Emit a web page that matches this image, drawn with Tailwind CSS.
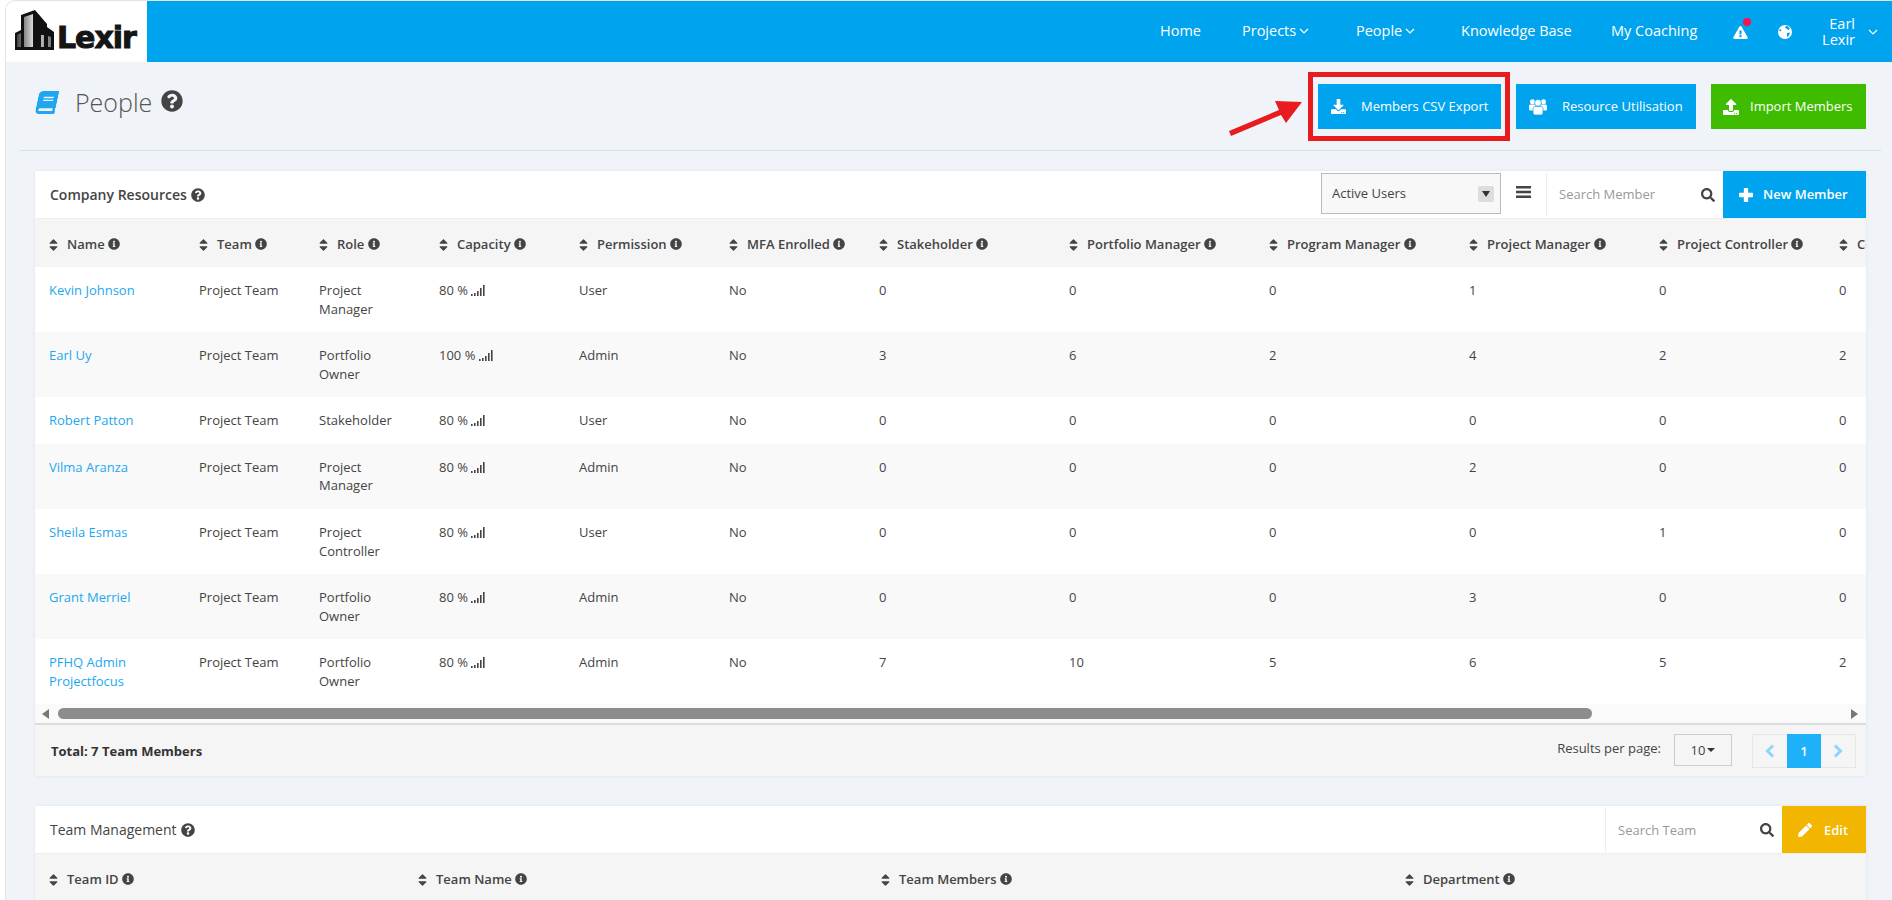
<!DOCTYPE html>
<html lang="en">
<head>
  <meta charset="UTF-8">
  <meta name="viewport" content="width=device-width, initial-scale=1.0">
  <title>Lexir - People</title>
  <script src="https://cdn.jsdelivr.net/npm/@tailwindcss/browser@4"></script>
</head>
<body class="bg-white h-[900px] overflow-hidden font-['Open_Sans',sans-serif] text-[13px] leading-[1.42857] text-[#444]">
  <!-- Icon sprites -->
  <svg class="hidden" xmlns="http://www.w3.org/2000/svg">
    <symbol id="i-info" viewBox="0 0 512 512"><path fill="currentColor" d="M256 8C119.043 8 8 119.083 8 256c0 136.997 111.043 248 248 248s248-111.003 248-248C504 119.083 392.957 8 256 8zm0 110c23.196 0 42 18.804 42 42s-18.804 42-42 42-42-18.804-42-42 18.804-42 42-42zm56 254c0 6.627-5.373 12-12 12h-88c-6.627 0-12-5.373-12-12v-24c0-6.627 5.373-12 12-12h12v-64h-12c-6.627 0-12-5.373-12-12v-24c0-6.627 5.373-12 12-12h64c6.627 0 12 5.373 12 12v100h12c6.627 0 12 5.373 12 12v24z"/></symbol>
    <symbol id="i-help" viewBox="0 0 512 512"><path fill="currentColor" d="M504 256c0 136.997-111.043 248-248 248S8 392.997 8 256C8 119.083 119.043 8 256 8s248 111.083 248 248zM262.655 90c-54.497 0-89.255 22.957-116.549 63.758-3.536 5.286-2.353 12.415 2.715 16.258l34.699 26.31c5.205 3.947 12.621 3.008 16.665-2.122 17.864-22.658 30.113-35.797 57.303-35.797 20.429 0 45.698 13.148 45.698 32.958 0 14.976-12.363 22.667-32.534 33.976C247.128 238.528 216 254.941 216 296v4c0 6.627 5.373 12 12 12h56c6.627 0 12-5.373 12-12v-1.333c0-28.462 83.186-29.647 83.186-106.667 0-58.002-60.165-102-116.531-102zM256 338c-25.365 0-46 20.635-46 46 0 25.364 20.635 46 46 46s46-20.636 46-46c0-25.365-20.635-46-46-46z"/></symbol>
    <symbol id="i-search" viewBox="0 0 512 512"><path fill="currentColor" d="M505 442.7L405.3 343c-4.5-4.5-10.6-7-17-7H372c27.6-35.3 44-79.7 44-128C416 93.1 322.9 0 208 0S0 93.1 0 208s93.1 208 208 208c48.3 0 92.7-16.4 128-44v16.3c0 6.4 2.5 12.5 7 17l99.7 99.7c9.4 9.4 24.6 9.4 33.9 0l28.3-28.3c9.4-9.4 9.4-24.6.1-34zM208 336c-70.7 0-128-57.2-128-128 0-70.7 57.2-128 128-128 70.7 0 128 57.2 128 128 0 70.7-57.2 128-128 128z"/></symbol>
    <symbol id="i-sort" viewBox="0 0 320 512"><path fill="currentColor" d="M41 300h238c21.4 0 32.1 25.9 17 41L177 460c-9.4 9.4-24.6 9.4-33.9 0L24 341c-15.1-15.1-4.4-41 17-41zm255-128L177 53c-9.4-9.4-24.6-9.4-33.9 0L24 172c-15.1 15.1-4.4 41 17 41h238c21.4 0 32.1-25.9 17-41z"/></symbol>
    <symbol id="i-plus" viewBox="0 0 16 16"><path fill="currentColor" d="M5.500 1a1 1 0 0 1 1-1h3a1 1 0 0 1 1 1v4.500H15a1 1 0 0 1 1 1v3a1 1 0 0 1-1 1h-4.500V15a1 1 0 0 1-1 1h-3a1 1 0 0 1-1-1v-4.500H1a1 1 0 0 1-1-1v-3a1 1 0 0 1 1-1h4.500z"/></symbol>
    <symbol id="i-pencil" viewBox="0 0 512 512"><path fill="currentColor" d="M497.9 142.1l-46.1 46.1c-4.7 4.7-12.3 4.7-17 0l-111-111c-4.7-4.7-4.7-12.3 0-17l46.1-46.1c18.7-18.7 49.1-18.7 67.9 0l60.1 60.1c18.8 18.7 18.8 49.1 0 67.9zM284.2 99.8L21.6 362.4.4 483.9c-2.9 16.4 11.4 30.6 27.8 27.7l121.5-21.3 262.6-262.6c4.7-4.7 4.7-12.3 0-17l-111-111c-4.8-4.7-12.4-4.7-17.1.1z"/></symbol>
    <symbol id="i-download" viewBox="0 0 512 512"><path fill="currentColor" d="M216 0h80c13.3 0 24 10.7 24 24v168h87.7c17.8 0 26.7 21.5 14.1 34.1L269.7 378.3c-7.5 7.5-19.8 7.500-27.3 0L90.1 226.1c-12.6-12.6-3.7-34.1 14.1-34.1H192V24c0-13.3 10.7-24 24-24zm296 376v112c0 13.3-10.7 24-24 24H24c-13.3 0-24-10.7-24-24V376c0-13.3 10.7-24 24-24h146.7l49 49c20.1 20.1 52.5 20.1 72.6 0l49-49H488c13.3 0 24 10.7 24 24zm-124 88c0-11-9-20-20-20s-20 9-20 20 9 20 20 20 20-9 20-20zm64 0c0-11-9-20-20-20s-20 9-20 20 9 20 20 20 20-9 20-20z"/></symbol>
    <symbol id="i-upload" viewBox="0 0 512 512"><path fill="currentColor" d="M296 384h-80c-13.3 0-24-10.7-24-24V192h-87.7c-17.8 0-26.7-21.5-14.1-34.1L242.3 5.700c7.500-7.500 19.800-7.500 27.300 0l152.200 152.200c12.600 12.600 3.700 34.100-14.100 34.100H320v168c0 13.300-10.700 24-24 24zm216-8v112c0 13.300-10.700 24-24 24H24c-13.300 0-24-10.700-24-24V376c0-13.300 10.700-24 24-24h136v8c0 30.900 25.100 56 56 56h80c30.900 0 56-25.100 56-56v-8h136c13.300 0 24 10.700 24 24zm-124 88c0-11-9-20-20-20s-20 9-20 20 9 20 20 20 20-9 20-20zm64 0c0-11-9-20-20-20s-20 9-20 20 9 20 20 20 20-9 20-20z"/></symbol>
    <symbol id="i-users" viewBox="0 0 18 16"><circle cx="3.500" cy="2.800" r="2.500" fill="currentColor"/><circle cx="14.500" cy="2.800" r="2.500" fill="currentColor"/><path fill="currentColor" d="M0 7c0-1 .8-1.500 1.800-1.500h14.400c1 0 1.800.5 1.800 1.500v3.500a1 1 0 0 1-1 1H1a1 1 0 0 1-1-1z"/><g stroke="#00a3ee" stroke-width=".7"><circle cx="9" cy="3.800" r="3.400" fill="currentColor"/><path fill="currentColor" d="M5.800 7.500h6.400c1 0 1.800 1 1.800 2V14a2 2 0 0 1-2 2H6a2 2 0 0 1-2-2V9.500c0-1 .8-2 1.800-2z"/></g></symbol>
    <symbol id="i-book" viewBox="0 0 448 512"><path fill="currentColor" d="M448 360V24c0-13.300-10.700-24-24-24H96C43 0 0 43 0 96v320c0 53 43 96 96 96h328c13.300 0 24-10.700 24-24v-16c0-7.500-3.500-14.300-8.900-18.700-4.200-15.400-4.200-59.300 0-74.700 5.400-4.300 8.900-11.100 8.900-18.600zM128 134c0-3.300 2.700-6 6-6h212c3.300 0 6 2.700 6 6v20c0 3.300-2.700 6-6 6H134c-3.300 0-6-2.700-6-6v-20zm0 64c0-3.300 2.700-6 6-6h212c3.300 0 6 2.700 6 6v20c0 3.300-2.700 6-6 6H134c-3.300 0-6-2.700-6-6v-20zm253.400 250H96c-17.700 0-32-14.300-32-32 0-17.600 14.400-32 32-32h285.400c-1.900 17.100-1.900 46.900 0 64z"/></symbol>
    <symbol id="i-warn" viewBox="0 0 576 512"><path fill="currentColor" d="M569.517 440.013C587.975 472.007 564.806 512 527.94 512H48.054c-36.937 0-59.999-40.055-41.577-71.987L246.423 23.985c18.467-32.009 64.72-31.951 83.154 0l239.94 416.028zM288 354c-25.405 0-46 20.595-46 46s20.595 46 46 46 46-20.595 46-46-20.595-46-46-46zm-43.673-165.346l7.418 136c.347 6.364 5.609 11.346 11.982 11.346h48.546c6.373 0 11.635-4.982 11.982-11.346l7.418-136c.375-6.874-5.098-12.654-11.982-12.654h-63.383c-6.884 0-12.356 5.78-11.981 12.654z"/></symbol>
    <symbol id="i-signal" viewBox="0 0 14 11"><path fill="currentColor" d="M0 9h1.600v2H0zM3 8h1.600v3H3zM6 6h1.600v5H6zM9 3h1.600v8H9zM12 0h1.600v11H12z"/></symbol>
    <symbol id="i-chev" viewBox="0 0 10 6"><path fill="none" stroke="currentColor" stroke-width="1.200" d="M1 1l4 4 4-4"/></symbol>
  </svg>

  <div class="ml-[5px] border-l border-t border-[#e4e4e4] rounded-tl-[10px] overflow-hidden bg-[#f0f3f7] h-[900px]">
    <!-- Navbar -->
    <nav class="flex h-[61px]">
      <div class="w-[141px] bg-white flex items-start pl-[9px] pt-[9px] shrink-0">
        <svg width="39" height="41" viewBox="0 0 39 41" class="shrink-0">
          <defs>
            <linearGradient id="bld" x1="0" x2="1" y1="0" y2="0"><stop offset="0" stop-color="#444"/><stop offset="0.5" stop-color="#e4e4e4"/><stop offset="1" stop-color="#777"/></linearGradient>
          </defs>
          <path fill="#111" d="M6 5L20 0l12 14v3l7 5v18H0V23l6-3z"/>
          <path fill="url(#bld)" d="M9 7l9-3v33H9zM2 25l4-2v14H2zM26 25h3v12h-3zM33 26l3 1v10h-3z"/>
        </svg>
        <span class="font-['DejaVu_Sans',sans-serif] font-bold text-[30px] leading-none text-[#151515] mt-[13px] ml-[3px] tracking-[-1px] [-webkit-text-stroke:1px_#151515]">Lexir</span>
      </div>
      <div class="flex-1 bg-[#00a3ee] flex items-center justify-end text-white text-[14.5px] pr-[14px]">
        <a class="w-[82px]">Home</a>
        <a class="w-[114px] flex items-center gap-[3px]">Projects <svg class="w-[10px] h-[6px]"><use href="#i-chev"/></svg></a>
        <a class="w-[105px] flex items-center gap-[3px]">People <svg class="w-[10px] h-[6px]"><use href="#i-chev"/></svg></a>
        <a class="w-[150px]">Knowledge Base</a>
        <a class="w-[122px]">My Coaching</a>
        <span class="relative w-[45px] flex">
          <svg class="w-[15px] h-[13px] mt-[2px]"><use href="#i-warn"/></svg>
          <span class="absolute -top-[6px] left-[10px] w-[8px] h-[8px] rounded-full bg-[#f4134f]"></span>
        </span>
        <span class="w-[44px] flex">
          <svg class="w-[14px] h-[14px]" viewBox="0 0 14 14"><circle cx="7" cy="7" r="7" fill="#fff"/><path fill="#00a3ee" d="M7 1.500l2.500-.5L12 3.500 10.500 5 9 4 7.500 3zM9 8l3-.5-1 3-2 1.500zM1 5l1.500-1 1 1.500-1.500 1z"/></svg>
        </span>
        <span class="text-right leading-[16px] w-[33px] mr-[13px]">Earl<br>Lexir</span>
        <svg class="w-[10px] h-[6px]"><use href="#i-chev"/></svg>
      </div>
    </nav>

    <!-- Page header -->
    <header class="mx-[14px] mr-[11px] h-[89px] border-b border-[#d5dfe9] flex justify-between px-[15px] pt-[22px]">
      <div class="flex items-start text-[#555]">
        <svg class="w-[20px] h-[23px] text-[#1ea7f0] -skew-x-12 ml-[2px] mt-[7px]"><use href="#i-book"/></svg>
        <h1 class="text-[25px] font-light leading-[34px] ml-[18px] mt-[1px]">People</h1>
        <svg class="w-[22px] h-[22px] text-[#444] ml-[9px] mt-[6px]"><use href="#i-help"/></svg>
      </div>
      <div class="flex gap-[15px] text-white h-[45px]">
        <button class="relative w-[183px] bg-[#00a3ee] flex items-center pl-[13px]">
          <svg class="w-[15px] h-[15px]"><use href="#i-download"/></svg>
          <span class="ml-[15px]">Members CSV Export</span>
          <!-- red annotation box and arrow -->
          <span class="absolute -left-[10px] -top-[12px] w-[202px] h-[69px] border-[5px] border-[#e81c1f]"></span>
          <svg class="absolute -left-[90px] top-[16px] w-[76px] h-[36px]" viewBox="0 0 76 36"><path fill="#e81c1f" d="M74 2L47 1l4 9L1 31l2 5 50-21 5 8z"/></svg>
        </button>
        <button class="w-[180px] bg-[#00a3ee] flex items-center pl-[13px]">
          <svg class="w-[18px] h-[16px]"><use href="#i-users"/></svg>
          <span class="ml-[15px]">Resource Utilisation</span>
        </button>
        <button class="w-[155px] bg-[#3fbc00] flex items-center pl-[12px]">
          <svg class="w-[16px] h-[16px]"><use href="#i-upload"/></svg>
          <span class="ml-[11px]">Import Members</span>
        </button>
      </div>
    </header>

    <!-- Company Resources -->
    <section class="mx-[29px] mr-[26px] mt-[20px] bg-white shadow-[0_0_3px_rgba(0,0,0,0.08)]">
      <div class="flex h-[48px] items-stretch border-b border-[#eee]">
        <div class="flex-1 flex items-center pl-[15px] text-[14px] font-semibold">
          Company Resources
          <svg class="w-[14px] h-[14px] ml-[4px]"><use href="#i-help"/></svg>
        </div>
        <div class="mt-[2px] w-[180px] h-[41px] border border-[#bbb] bg-[#f8f8f8] flex items-center justify-between pl-[10px] pr-[6px]">
          <span>Active Users</span>
          <span class="w-[16px] h-[16px] rounded-[2px] bg-[#ddd] flex items-center justify-center"><span class="border-x-[4px] border-x-transparent border-t-[6px] border-t-[#333]"></span></span>
        </div>
        <div class="w-[45px] flex items-center justify-center pb-[5px]">
          <svg width="15" height="12" viewBox="0 0 15 12"><path fill="#444" d="M0 0h15v2.500H0zM0 4.700h15v2.500H0zM0 9.400h15v2.500H0z"/></svg>
        </div>
        <div class="w-[177px] my-[2px] border-l border-[#eee] flex items-center justify-between pl-[12px] pr-[8px]">
          <span class="text-[#999]">Search Member</span>
          <svg class="w-[14px] h-[14px]"><use href="#i-search"/></svg>
        </div>
        <button class="w-[143px] bg-[#00a3ee] text-white font-semibold flex items-center pl-[16px]">
          <svg class="w-[14px] h-[14px]"><use href="#i-plus"/></svg>
          <span class="ml-[10px]">New Member</span>
        </button>
      </div>

      <div class="overflow-hidden">
        <table class="table-fixed w-[1990px] border-collapse [&_td]:px-[14px] [&_td]:py-[14px] [&_td]:align-top [&_th]:px-[14px] [&_th]:pt-[2px] [&_th]:h-[48px] [&_th]:text-left [&_th]:font-semibold [&_th]:whitespace-nowrap">
          <colgroup>
            <col class="w-[150px]"><col class="w-[120px]"><col class="w-[120px]"><col class="w-[140px]"><col class="w-[150px]"><col class="w-[150px]"><col class="w-[190px]"><col class="w-[200px]"><col class="w-[200px]"><col class="w-[190px]"><col class="w-[180px]"><col class="w-[200px]">
          </colgroup>
          <thead class="bg-[#f5f5f5]">
            <tr>
              <th><svg class="inline w-[9px] h-[14px] mr-[9px] align-[-3px]"><use href="#i-sort"/></svg>Name <svg class="inline w-[12px] h-[12px] align-[-1px]"><use href="#i-info"/></svg></th>
              <th><svg class="inline w-[9px] h-[14px] mr-[9px] align-[-3px]"><use href="#i-sort"/></svg>Team <svg class="inline w-[12px] h-[12px] align-[-1px]"><use href="#i-info"/></svg></th>
              <th><svg class="inline w-[9px] h-[14px] mr-[9px] align-[-3px]"><use href="#i-sort"/></svg>Role <svg class="inline w-[12px] h-[12px] align-[-1px]"><use href="#i-info"/></svg></th>
              <th><svg class="inline w-[9px] h-[14px] mr-[9px] align-[-3px]"><use href="#i-sort"/></svg>Capacity <svg class="inline w-[12px] h-[12px] align-[-1px]"><use href="#i-info"/></svg></th>
              <th><svg class="inline w-[9px] h-[14px] mr-[9px] align-[-3px]"><use href="#i-sort"/></svg>Permission <svg class="inline w-[12px] h-[12px] align-[-1px]"><use href="#i-info"/></svg></th>
              <th><svg class="inline w-[9px] h-[14px] mr-[9px] align-[-3px]"><use href="#i-sort"/></svg>MFA Enrolled <svg class="inline w-[12px] h-[12px] align-[-1px]"><use href="#i-info"/></svg></th>
              <th><svg class="inline w-[9px] h-[14px] mr-[9px] align-[-3px]"><use href="#i-sort"/></svg>Stakeholder <svg class="inline w-[12px] h-[12px] align-[-1px]"><use href="#i-info"/></svg></th>
              <th><svg class="inline w-[9px] h-[14px] mr-[9px] align-[-3px]"><use href="#i-sort"/></svg>Portfolio Manager <svg class="inline w-[12px] h-[12px] align-[-1px]"><use href="#i-info"/></svg></th>
              <th><svg class="inline w-[9px] h-[14px] mr-[9px] align-[-3px]"><use href="#i-sort"/></svg>Program Manager <svg class="inline w-[12px] h-[12px] align-[-1px]"><use href="#i-info"/></svg></th>
              <th><svg class="inline w-[9px] h-[14px] mr-[9px] align-[-3px]"><use href="#i-sort"/></svg>Project Manager <svg class="inline w-[12px] h-[12px] align-[-1px]"><use href="#i-info"/></svg></th>
              <th><svg class="inline w-[9px] h-[14px] mr-[9px] align-[-3px]"><use href="#i-sort"/></svg>Project Controller <svg class="inline w-[12px] h-[12px] align-[-1px]"><use href="#i-info"/></svg></th>
              <th><svg class="inline w-[9px] h-[14px] mr-[9px] align-[-3px]"><use href="#i-sort"/></svg>Contributor <svg class="inline w-[12px] h-[12px] align-[-1px]"><use href="#i-info"/></svg></th>
            </tr>
          </thead>
          <tbody>
            <tr>
              <td><a class="text-[#1ea7f0]">Kevin Johnson</a></td><td>Project Team</td><td>Project Manager</td><td>80 % <svg class="inline w-[14px] h-[11px] align-[-1px]"><use href="#i-signal"/></svg></td><td>User</td><td>No</td><td>0</td><td>0</td><td>0</td><td>1</td><td>0</td><td>0</td>
            </tr>
            <tr class="bg-[#f9f9f9]">
              <td><a class="text-[#1ea7f0]">Earl Uy</a></td><td>Project Team</td><td>Portfolio Owner</td><td>100 % <svg class="inline w-[14px] h-[11px] align-[-1px]"><use href="#i-signal"/></svg></td><td>Admin</td><td>No</td><td>3</td><td>6</td><td>2</td><td>4</td><td>2</td><td>2</td>
            </tr>
            <tr>
              <td><a class="text-[#1ea7f0]">Robert Patton</a></td><td>Project Team</td><td>Stakeholder</td><td>80 % <svg class="inline w-[14px] h-[11px] align-[-1px]"><use href="#i-signal"/></svg></td><td>User</td><td>No</td><td>0</td><td>0</td><td>0</td><td>0</td><td>0</td><td>0</td>
            </tr>
            <tr class="bg-[#f9f9f9]">
              <td><a class="text-[#1ea7f0]">Vilma Aranza</a></td><td>Project Team</td><td>Project Manager</td><td>80 % <svg class="inline w-[14px] h-[11px] align-[-1px]"><use href="#i-signal"/></svg></td><td>Admin</td><td>No</td><td>0</td><td>0</td><td>0</td><td>2</td><td>0</td><td>0</td>
            </tr>
            <tr>
              <td><a class="text-[#1ea7f0]">Sheila Esmas</a></td><td>Project Team</td><td>Project Controller</td><td>80 % <svg class="inline w-[14px] h-[11px] align-[-1px]"><use href="#i-signal"/></svg></td><td>User</td><td>No</td><td>0</td><td>0</td><td>0</td><td>0</td><td>1</td><td>0</td>
            </tr>
            <tr class="bg-[#f9f9f9]">
              <td><a class="text-[#1ea7f0]">Grant Merriel</a></td><td>Project Team</td><td>Portfolio Owner</td><td>80 % <svg class="inline w-[14px] h-[11px] align-[-1px]"><use href="#i-signal"/></svg></td><td>Admin</td><td>No</td><td>0</td><td>0</td><td>0</td><td>3</td><td>0</td><td>0</td>
            </tr>
            <tr>
              <td><a class="text-[#1ea7f0]">PFHQ Admin Projectfocus</a></td><td>Project Team</td><td>Portfolio Owner</td><td>80 % <svg class="inline w-[14px] h-[11px] align-[-1px]"><use href="#i-signal"/></svg></td><td>Admin</td><td>No</td><td>7</td><td>10</td><td>5</td><td>6</td><td>5</td><td>2</td>
            </tr>
          </tbody>
        </table>
      </div>

      <!-- Horizontal scrollbar -->
      <div class="h-[19px] bg-[#fafafa] flex items-center pl-[7px] pr-[8px]">
        <span class="border-y-[5px] border-y-transparent border-r-[7px] border-r-[#777]"></span>
        <span class="ml-[9px] w-[1534px] h-[11px] rounded-full bg-[#8c8c8c]"></span>
        <span class="ml-auto border-y-[5px] border-y-transparent border-l-[7px] border-l-[#777]"></span>
      </div>

      <!-- Footer -->
      <div class="h-[53px] bg-[#f5f5f5] border-t-2 border-[#ddd] flex items-start justify-between pl-[16px] pr-[10px] pt-[9px]">
        <span class="font-bold mt-[8px] text-[#333]">Total: 7 Team Members</span>
        <div class="flex items-start">
          <span class="mt-[5px]">Results per page:</span>
          <span class="ml-[13px] w-[58px] h-[32px] border border-[#ccc] flex items-center justify-center gap-[2px]">10 <span class="border-x-[4px] border-x-transparent border-t-[4px] border-t-[#333]"></span></span>
          <div class="ml-[20px] w-[104px] h-[34px] border border-[#e6e6e6] flex">
            <span class="flex-1 flex items-center justify-center text-[#8ed5fb]"><svg width="10" height="14" viewBox="0 0 10 14"><path fill="none" stroke="currentColor" stroke-width="3" d="M8 1.500L2.500 7 8 12.500"/></svg></span>
            <span class="w-[34px] bg-[#1eb0f8] text-white font-semibold flex items-center justify-center -my-px">1</span>
            <span class="flex-1 flex items-center justify-center text-[#8ed5fb]"><svg width="10" height="14" viewBox="0 0 10 14"><path fill="none" stroke="currentColor" stroke-width="3" d="M2 1.500L7.500 7 2 12.500"/></svg></span>
          </div>
        </div>
      </div>
    </section>

    <!-- Team Management -->
    <section class="mx-[29px] mr-[26px] mt-[30px] bg-white shadow-[0_0_3px_rgba(0,0,0,0.08)]">
      <div class="flex h-[48px] items-stretch border-b border-[#eee]">
        <div class="flex-1 flex items-center pl-[15px] text-[14px] font-medium">
          Team Management
          <svg class="w-[14px] h-[14px] ml-[4px]"><use href="#i-help"/></svg>
        </div>
        <div class="w-[177px] my-[1px] border-l border-[#eee] flex items-center justify-between pl-[12px] pr-[8px]">
          <span class="text-[#999]">Search Team</span>
          <svg class="w-[14px] h-[14px]"><use href="#i-search"/></svg>
        </div>
        <button class="w-[84px] bg-[#f2b500] text-white font-semibold flex items-center pl-[16px]">
          <svg class="w-[14px] h-[14px]"><use href="#i-pencil"/></svg>
          <span class="ml-[12px]">Edit</span>
        </button>
      </div>
      <table class="table-fixed w-full border-collapse [&_th]:px-[14px] [&_th]:pt-[2px] [&_th]:h-[48px] [&_th]:text-left [&_th]:font-semibold">
        <colgroup><col class="w-[369px]"><col class="w-[463px]"><col class="w-[524px]"><col></colgroup>
        <thead class="bg-[#f5f5f5]">
          <tr>
            <th><svg class="inline w-[9px] h-[14px] mr-[9px] align-[-3px]"><use href="#i-sort"/></svg>Team ID <svg class="inline w-[12px] h-[12px] align-[-1px]"><use href="#i-info"/></svg></th>
            <th><svg class="inline w-[9px] h-[14px] mr-[9px] align-[-3px]"><use href="#i-sort"/></svg>Team Name <svg class="inline w-[12px] h-[12px] align-[-1px]"><use href="#i-info"/></svg></th>
            <th><svg class="inline w-[9px] h-[14px] mr-[9px] align-[-3px]"><use href="#i-sort"/></svg>Team Members <svg class="inline w-[12px] h-[12px] align-[-1px]"><use href="#i-info"/></svg></th>
            <th><svg class="inline w-[9px] h-[14px] mr-[9px] align-[-3px]"><use href="#i-sort"/></svg>Department <svg class="inline w-[12px] h-[12px] align-[-1px]"><use href="#i-info"/></svg></th>
          </tr>
        </thead>
      </table>
    </section>
  </div>
</body>
</html>
